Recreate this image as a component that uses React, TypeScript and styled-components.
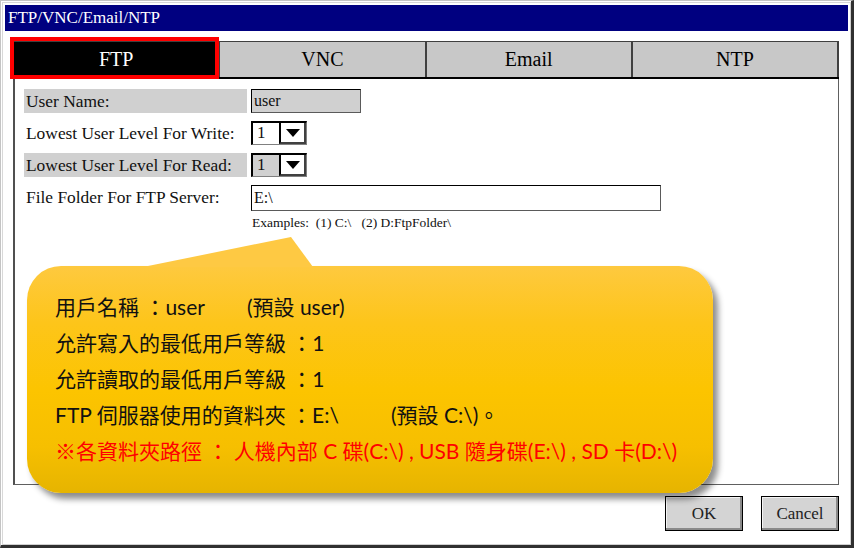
import React from 'react';
import styled, { createGlobalStyle } from 'styled-components';

const GlobalStyle = createGlobalStyle`
  html, body { margin: 0; padding: 0; background: #fff; }
  body { width: 854px; height: 548px; overflow: hidden; }
  * { box-sizing: border-box; }
`;

const serif = `"Liberation Serif", "Times New Roman", serif`;

const Window = styled.div`
  position: relative;
  width: 854px;
  height: 548px;
  display: flex;
  flex-direction: column;
  background: #fff;
  border-style: solid;
  border-width: 1px 3px 3px 1px;
  border-color: #c4c4c4 #303030 #303030 #c4c4c4;
  box-shadow: inset 1px 1px 0 #ffffff, inset 2px 2px 0 #d8d8d8, inset -1px -1px 0 #d0d0d0;
  padding: 4px 3px 0 4px;
  font-family: ${serif};
`;

const TitleBar = styled.div`
  height: 26px;
  background: #000080;
  color: #fff;
  font-size: 17px;
  line-height: 26px;
  padding-left: 3px;
  white-space: nowrap;
`;

const Client = styled.div`
  flex: 1;
  display: flex;
  flex-direction: column;
  padding: 10px 9px 0 8px;
`;

const TabBar = styled.div`
  display: flex;
  height: 38px;
  border-top: 1px solid #404040;
  border-left: 1px solid #404040;
  border-bottom: 2px solid #000;
`;

const Tab = styled.div<{ $active?: boolean }>`
  position: relative;
  flex: 1;
  display: flex;
  align-items: center;
  justify-content: center;
  background: ${(p) => (p.$active ? '#000' : '#c8c8c8')};
  color: ${(p) => (p.$active ? '#fff' : '#000')};
  border-right: 2px solid #404040;
  font-size: 20px;
  ${(p) =>
    p.$active &&
    `
    &::after {
      content: '';
      position: absolute;
      top: -5px;
      left: -4px;
      right: -1px;
      bottom: -2px;
      border: 4px solid #ff0000;
    }
  `}
`;

const Panel = styled.div`
  height: 406px;
  border: 1px solid #606060;
  border-top: none;
  border-left: 2px solid #505050;
  padding: 10px 0 0 9px;
  display: flex;
  flex-direction: column;
  gap: 8px;
`;

const Row = styled.div`
  display: flex;
  align-items: flex-start;
  gap: 4px;
`;

const Label = styled.div<{ $shaded?: boolean }>`
  width: 223px;
  height: 24px;
  line-height: 24px;
  padding-left: 2px;
  font-size: 17.4px;
  color: #111;
  background: ${(p) => (p.$shaded ? '#d0d0d0' : 'transparent')};
  white-space: nowrap;
`;

const Field = styled.div`
  display: flex;
  flex-direction: column;
`;

const TextBox = styled.div<{ $w: number; $h: number; $gray?: boolean }>`
  width: ${(p) => p.$w}px;
  height: ${(p) => p.$h}px;
  line-height: ${(p) => p.$h - 2}px;
  background: ${(p) => (p.$gray ? '#d0d0d0' : '#fff')};
  border: 1px solid #5a5a5a;
  border-top-color: #000;
  border-left-color: #000;
  font-size: 16px;
  padding-left: 2px;
  color: #111;
`;

const Select = styled.div<{ $gray?: boolean }>`
  display: flex;
  width: 56px;
  height: 24px;
  border-style: solid;
  border-width: 2px 1px 1px 2px;
  border-color: #000 #808080 #808080 #000;
  background: ${(p) => (p.$gray ? '#d0d0d0' : '#fff')};
`;

const SelectValue = styled.div`
  flex: 1;
  font-size: 17px;
  line-height: 20px;
  padding-left: 4px;
  color: #111;
`;

const SelectButton = styled.div`
  width: 27px;
  display: flex;
  align-items: center;
  justify-content: center;
  background: #fff;
  border-left: 2px solid #000;
  border-right: 2px solid #404040;
  border-bottom: 2px solid #404040;
`;

const Arrow = styled.span`
  width: 0;
  height: 0;
  border-left: 7px solid transparent;
  border-right: 7px solid transparent;
  border-top: 8px solid #000;
`;

const Hint = styled.div`
  margin-top: 4px;
  margin-left: 1px;
  font-size: 13.5px;
  white-space: pre;
  color: #111;
`;

const Footer = styled.div`
  display: flex;
  justify-content: flex-end;
  gap: 18px;
  margin-top: 11px;
`;

const Button = styled.div`
  width: 78px;
  height: 35px;
  display: flex;
  align-items: center;
  justify-content: center;
  background: #d4d4d4;
  border: 1px solid #000;
  box-shadow: inset -2px -2px 0 #8a8a8a, inset 1px 1px 0 #f4f4f4;
  font-size: 17px;
  color: #222;
`;

const Callout = styled.div`
  position: absolute;
  left: 26px;
  top: 265px;
  width: 686px;
  height: 227px;
  border-radius: 34px;
  background: linear-gradient(#fec93f 0%, #fdc51a 25%, #fcc400 55%, #f6bf00 80%, #e6b400 100%);
  box-shadow: 5px 6px 6px rgba(0, 0, 0, 0.45);
  padding: 23px 0 0 28px;
  font-family: Lato, "Noto Sans CJK TC", "Noto Sans", sans-serif;
  font-size: 21px;
  line-height: 36px;
  color: #111;

  &::before {
    content: '';
    position: absolute;
    left: 116px;
    top: -29px;
    width: 170px;
    height: 30px;
    background: #fec943;
    clip-path: polygon(0 100%, 148px 0, 100% 100%);
  }
`;

const Line = styled.div<{ $red?: boolean }>`
  white-space: pre;
  color: ${(p) => (p.$red ? '#ff0000' : '#111')};
`;

const Gap = styled.span<{ $w: number }>`
  display: inline-block;
  width: ${(p) => p.$w}px;
`;

export default function App() {
  return (
    <>
      <GlobalStyle />
      <Window>
        <TitleBar>FTP/VNC/Email/NTP</TitleBar>
        <Client>
          <TabBar>
            <Tab $active>FTP</Tab>
            <Tab>VNC</Tab>
            <Tab>Email</Tab>
            <Tab>NTP</Tab>
          </TabBar>
          <Panel>
            <Row>
              <Label $shaded>User Name:</Label>
              <TextBox $w={110} $h={24} $gray>user</TextBox>
            </Row>
            <Row>
              <Label>Lowest User Level For Write:</Label>
              <Select>
                <SelectValue>1</SelectValue>
                <SelectButton>
                  <Arrow />
                </SelectButton>
              </Select>
            </Row>
            <Row>
              <Label $shaded>Lowest User Level For Read:</Label>
              <Select $gray>
                <SelectValue>1</SelectValue>
                <SelectButton>
                  <Arrow />
                </SelectButton>
              </Select>
            </Row>
            <Row>
              <Label>File Folder For FTP Server:</Label>
              <Field>
                <TextBox $w={410} $h={26}>E:\</TextBox>
                <Hint>{'Examples:  (1) C:\\   (2) D:FtpFolder\\'}</Hint>
              </Field>
            </Row>
          </Panel>
          <Footer>
            <Button>OK</Button>
            <Button>Cancel</Button>
          </Footer>
        </Client>
        <Callout>
          <Line>
            用戶名稱 ：user<Gap $w={42} />(預設 user)
          </Line>
          <Line>允許寫入的最低用戶等級 ：1</Line>
          <Line>允許讀取的最低用戶等級 ：1</Line>
          <Line>
            FTP 伺服器使用的資料夾 ：E:\<Gap $w={52} />(預設 C:\)。
          </Line>
          <Line $red>※各資料夾路徑 ： 人機內部 C 碟(C:\) , USB 隨身碟(E:\) , SD 卡(D:\)</Line>
        </Callout>
      </Window>
    </>
  );
}
